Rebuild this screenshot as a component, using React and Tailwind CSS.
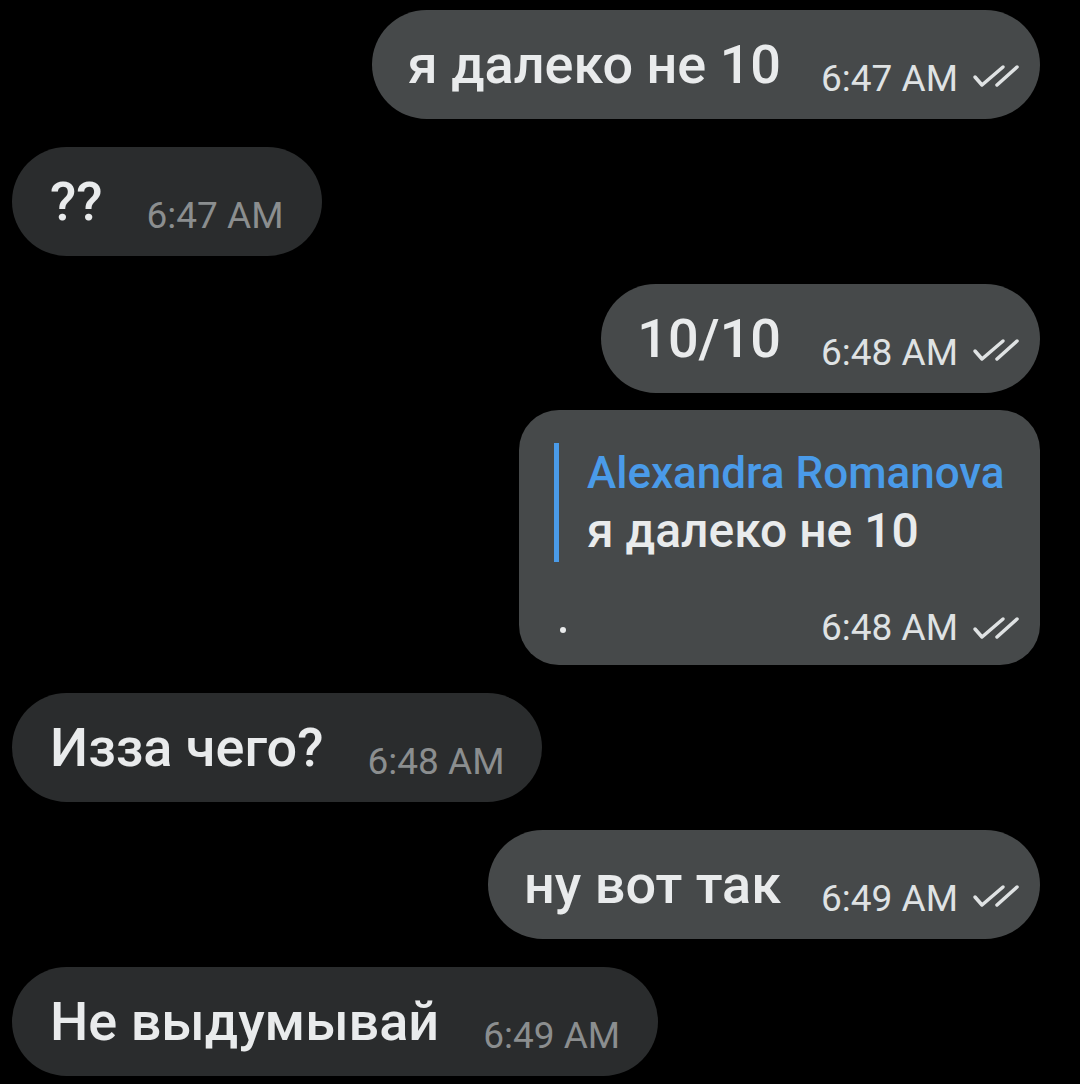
import React from 'react';

const font = { fontFamily: 'Roboto, "Noto Sans", sans-serif' };

const Checks = () => (
  <svg width="48" height="28" viewBox="0 0 48 28" fill="none" className="shrink-0">
    <path d="M3 14 L10 22 L31 4" stroke="#dfe2e3" strokeWidth="3.5" strokeLinecap="round" strokeLinejoin="round" />
    <path d="M25 22 L45 4" stroke="#dfe2e3" strokeWidth="3.5" strokeLinecap="round" />
  </svg>
);

const Out = ({ text, time }) => (
  <div className="flex justify-end">
    <div className="flex items-center h-[109px] rounded-full bg-[#46494a] pl-[36px] pr-[20px]">
      <span className="text-[54px] font-medium leading-none text-[#e9ebec]">{text}</span>
      <span className="ml-[40px] mt-[28px] text-[37px] leading-none text-[#dfe2e3]">{time}</span>
      <span className="ml-[14px] mt-[24px]"><Checks /></span>
    </div>
  </div>
);

const In = ({ text, time }) => (
  <div className="flex justify-start">
    <div className="flex items-center h-[109px] rounded-full bg-[#2a2c2d] pl-[38px] pr-[38px]">
      <span className="text-[54px] font-medium leading-none text-[#e9ebec]">{text}</span>
      <span className="ml-[44px] mt-[28px] text-[37px] leading-none text-[#8b8e8f]">{time}</span>
    </div>
  </div>
);

export default function App() {
  return (
    <div className="min-h-screen bg-black px-[12px] pt-[10px] pr-[40px]" style={font}>
      <div className="flex flex-col gap-[28px] w-[1028px]">
        <Out text="я далеко не 10" time="6:47 AM" />
        <In text="??" time="6:47 AM" />
        <div className="flex flex-col gap-[17px]">
          <Out text="10/10" time="6:48 AM" />
          <div className="flex justify-end">
            <div className="w-[521px] h-[255px] rounded-[40px] bg-[#46494a] flex flex-col pl-[35px] pr-[20px] pt-[33px]">
              <div className="flex border-l-[5px] border-[#4a9be9] pl-[28px] flex-col h-[119px] justify-center">
                <span className="text-[44px] leading-[56px] font-medium text-[#4a9be9] whitespace-nowrap">Alexandra Romanova</span>
                <span className="text-[48px] leading-[60px] font-medium text-[#e9ebec]">я далеко не 10</span>
              </div>
              <div className="flex items-center mt-[47px]">
                <span className="w-[6px] h-[6px] rounded-full bg-[#e9ebec] ml-[6px] mt-[4px]" />
                <span className="ml-auto text-[37px] leading-none text-[#dfe2e3]">6:48 AM</span>
                <span className="ml-[14px] mt-[2px]"><Checks /></span>
              </div>
            </div>
          </div>
        </div>
        <In text="Изза чего?" time="6:48 AM" />
        <Out text="ну вот так" time="6:49 AM" />
        <In text="Не выдумывай" time="6:49 AM" />
      </div>
    </div>
  );
}
